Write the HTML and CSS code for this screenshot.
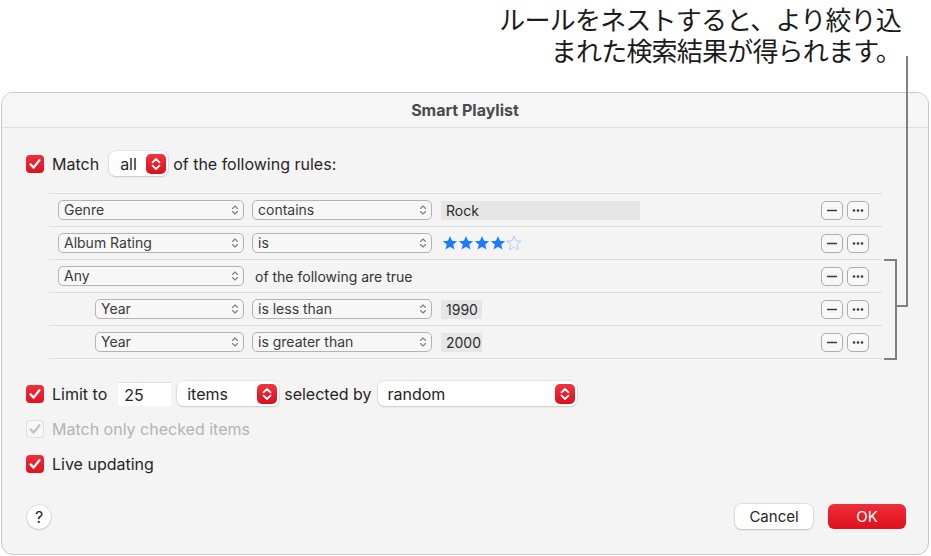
FILE: index.html
```html
<!DOCTYPE html>
<html lang="ja">

<head>
    <meta charset="UTF-8">
    <title>Smart Playlist</title>
    <link rel="stylesheet" href="styles.css">
</head>

<body>
    <div class="callout">ルールをネストすると、より絞り込<br>まれた検索結果が得られます。</div>

    <div class="window">
        <div class="titlebar">Smart Playlist</div>
        <div class="content">
            <div class="line match-line">
                <span class="check"><svg viewBox="0 0 18 18"><path d="M4.6 9.4l3 3.2 5.8-7.4" /></svg></span>
                <span class="label">Match</span>
                <span class="popup popup-all">all
                    <span class="stepper"><svg viewBox="0 0 20 20"><path d="M6.5 8.3L10 5l3.5 3.3M6.5 11.7L10 15l3.5-3.3" /></svg></span>
                </span>
                <span class="label after">of the following rules:</span>
            </div>

            <div class="rules">
                <div class="rule">
                    <span class="select sel-a">Genre<svg class="arrows" viewBox="0 0 8 12"><path d="M1.5 4.5L4 2l2.5 2.5M1.5 7.5L4 10l2.5-2.5" /></svg></span>
                    <span class="select sel-b">contains<svg class="arrows" viewBox="0 0 8 12"><path d="M1.5 4.5L4 2l2.5 2.5M1.5 7.5L4 10l2.5-2.5" /></svg></span>
                    <span class="field field-wide">Rock</span>
                    <span class="tools">
                        <span class="sq"><svg viewBox="0 0 20 17"><path class="minus" d="M5 8.5h10" /></svg></span>
                        <span class="sq"><svg viewBox="0 0 20 17"><circle cx="6" cy="8.5" r="1.3" /><circle cx="10" cy="8.5" r="1.3" /><circle cx="14" cy="8.5" r="1.3" /></svg></span>
                    </span>
                </div>
                <div class="rule">
                    <span class="select sel-a">Album Rating<svg class="arrows" viewBox="0 0 8 12"><path d="M1.5 4.5L4 2l2.5 2.5M1.5 7.5L4 10l2.5-2.5" /></svg></span>
                    <span class="select sel-b">is<svg class="arrows" viewBox="0 0 8 12"><path d="M1.5 4.5L4 2l2.5 2.5M1.5 7.5L4 10l2.5-2.5" /></svg></span>
                    <span class="stars">
                        <svg viewBox="0 0 16 16"><polygon class="on" points="8,1 10,5.8 15.2,6.2 11.2,9.5 12.5,14.6 8,11.8 3.5,14.6 4.8,9.5 0.8,6.2 6,5.8" /></svg>
                        <svg viewBox="0 0 16 16"><polygon class="on" points="8,1 10,5.8 15.2,6.2 11.2,9.5 12.5,14.6 8,11.8 3.5,14.6 4.8,9.5 0.8,6.2 6,5.8" /></svg>
                        <svg viewBox="0 0 16 16"><polygon class="on" points="8,1 10,5.8 15.2,6.2 11.2,9.5 12.5,14.6 8,11.8 3.5,14.6 4.8,9.5 0.8,6.2 6,5.8" /></svg>
                        <svg viewBox="0 0 16 16"><polygon class="on" points="8,1 10,5.8 15.2,6.2 11.2,9.5 12.5,14.6 8,11.8 3.5,14.6 4.8,9.5 0.8,6.2 6,5.8" /></svg>
                        <svg viewBox="0 0 16 16"><polygon class="off" points="8,1 10,5.8 15.2,6.2 11.2,9.5 12.5,14.6 8,11.8 3.5,14.6 4.8,9.5 0.8,6.2 6,5.8" /></svg>
                    </span>
                    <span class="tools">
                        <span class="sq"><svg viewBox="0 0 20 17"><path class="minus" d="M5 8.5h10" /></svg></span>
                        <span class="sq"><svg viewBox="0 0 20 17"><circle cx="6" cy="8.5" r="1.3" /><circle cx="10" cy="8.5" r="1.3" /><circle cx="14" cy="8.5" r="1.3" /></svg></span>
                    </span>
                </div>
                <div class="rule">
                    <span class="select sel-a">Any<svg class="arrows" viewBox="0 0 8 12"><path d="M1.5 4.5L4 2l2.5 2.5M1.5 7.5L4 10l2.5-2.5" /></svg></span>
                    <span class="rule-text">of the following are true</span>
                    <span class="tools">
                        <span class="sq"><svg viewBox="0 0 20 17"><path class="minus" d="M5 8.5h10" /></svg></span>
                        <span class="sq"><svg viewBox="0 0 20 17"><circle cx="6" cy="8.5" r="1.3" /><circle cx="10" cy="8.5" r="1.3" /><circle cx="14" cy="8.5" r="1.3" /></svg></span>
                    </span>
                </div>
                <div class="rule nested">
                    <span class="select sel-a">Year<svg class="arrows" viewBox="0 0 8 12"><path d="M1.5 4.5L4 2l2.5 2.5M1.5 7.5L4 10l2.5-2.5" /></svg></span>
                    <span class="select sel-b">is less than<svg class="arrows" viewBox="0 0 8 12"><path d="M1.5 4.5L4 2l2.5 2.5M1.5 7.5L4 10l2.5-2.5" /></svg></span>
                    <span class="field">1990</span>
                    <span class="tools">
                        <span class="sq"><svg viewBox="0 0 20 17"><path class="minus" d="M5 8.5h10" /></svg></span>
                        <span class="sq"><svg viewBox="0 0 20 17"><circle cx="6" cy="8.5" r="1.3" /><circle cx="10" cy="8.5" r="1.3" /><circle cx="14" cy="8.5" r="1.3" /></svg></span>
                    </span>
                </div>
                <div class="rule nested">
                    <span class="select sel-a">Year<svg class="arrows" viewBox="0 0 8 12"><path d="M1.5 4.5L4 2l2.5 2.5M1.5 7.5L4 10l2.5-2.5" /></svg></span>
                    <span class="select sel-b">is greater than<svg class="arrows" viewBox="0 0 8 12"><path d="M1.5 4.5L4 2l2.5 2.5M1.5 7.5L4 10l2.5-2.5" /></svg></span>
                    <span class="field">2000</span>
                    <span class="tools">
                        <span class="sq"><svg viewBox="0 0 20 17"><path class="minus" d="M5 8.5h10" /></svg></span>
                        <span class="sq"><svg viewBox="0 0 20 17"><circle cx="6" cy="8.5" r="1.3" /><circle cx="10" cy="8.5" r="1.3" /><circle cx="14" cy="8.5" r="1.3" /></svg></span>
                    </span>
                </div>
            </div>

            <div class="line limit-line">
                <span class="check"><svg viewBox="0 0 18 18"><path d="M4.6 9.4l3 3.2 5.8-7.4" /></svg></span>
                <span class="label">Limit to</span>
                <span class="number">25</span>
                <span class="popup popup-items">items
                    <span class="stepper"><svg viewBox="0 0 20 20"><path d="M6.5 8.3L10 5l3.5 3.3M6.5 11.7L10 15l3.5-3.3" /></svg></span>
                </span>
                <span class="label after">selected by</span>
                <span class="popup popup-random">random
                    <span class="stepper"><svg viewBox="0 0 20 20"><path d="M6.5 8.3L10 5l3.5 3.3M6.5 11.7L10 15l3.5-3.3" /></svg></span>
                </span>
            </div>

            <div class="line disabled">
                <span class="check off"><svg viewBox="0 0 18 18"><path d="M4.6 9.4l3 3.2 5.8-7.4" /></svg></span>
                <span class="label">Match only checked items</span>
            </div>

            <div class="line">
                <span class="check"><svg viewBox="0 0 18 18"><path d="M4.6 9.4l3 3.2 5.8-7.4" /></svg></span>
                <span class="label">Live updating</span>
            </div>

            <div class="footer">
                <span class="help">?</span>
                <span class="button cancel">Cancel</span>
                <span class="button ok">OK</span>
            </div>
        </div>
    </div>

    <!-- callout leader and bracket drawn over the dialog -->
    <div class="leader"></div>
    <div class="bracket"></div>
</body>

</html>
```

FILE: styles.css
```css
body {
    margin: 0;
    width: 931px;
    height: 556px;
    overflow: hidden;
    position: relative;
    background-color: #ffffff;
    font-family: Inter, "Liberation Sans", sans-serif;
    color: #262626;
}

.callout {
    height: 63px;
    padding: 3px 30px 0 0;
    text-align: right;
    font-family: "Noto Sans CJK JP", sans-serif;
    font-size: 26px;
    line-height: 31px;
    color: #1b1b1b;
    letter-spacing: -0.8px;
}

.window {
    margin: 26px 0 0 1px;
    width: 928px;
    height: 463px;
    box-sizing: border-box;
    border: 1px solid #c9c9c9;
    border-radius: 12px;
    background-color: #f4f4f4;
    display: flex;
    flex-direction: column;
    overflow: hidden;
}

.titlebar {
    height: 34px;
    line-height: 34px;
    flex-shrink: 0;
    text-align: center;
    font-size: 16px;
    font-weight: 700;
    color: #4b4b4b;
    background-color: #f6f6f6;
    border-bottom: 1px solid #e1e1e1;
}

.content {
    flex: 1;
    display: flex;
    flex-direction: column;
    padding: 0 22px 25px 24px;
}

.line {
    display: flex;
    align-items: center;
    height: 25px;
    margin-top: 10px;
    font-size: 16px;
}

.match-line {
    margin-top: 23px;
}

.limit-line {
    margin-top: 22px;
}

.check {
    width: 18px;
    height: 18px;
    border-radius: 4px;
    background: linear-gradient(#ef2f3b, #dc1420);
    display: flex;
    flex-shrink: 0;
}

.check svg {
    width: 18px;
    height: 18px;
}

.check path {
    fill: none;
    stroke: #ffffff;
    stroke-width: 2.3;
    stroke-linecap: round;
    stroke-linejoin: round;
}

.check.off {
    background: #f7f7f7;
    box-shadow: inset 0 0 0 1px #dedede;
}

.check.off path {
    stroke: #c4c4c4;
}

.label {
    margin-left: 8px;
}

.label.after {
    margin-left: 5px;
}

.disabled .label {
    color: #b3b3b3;
}

.popup {
    height: 25px;
    box-sizing: border-box;
    background-color: #ffffff;
    border-radius: 6px;
    box-shadow: 0 0 0 0.5px rgba(0, 0, 0, 0.12), 0 1px 2px rgba(0, 0, 0, 0.12);
    display: flex;
    align-items: center;
    justify-content: space-between;
    padding: 0 2px 0 11px;
    font-size: 16px;
}

.popup-all {
    width: 59px;
    margin-left: 10px;
}

.popup-items {
    width: 102px;
    margin-left: 6px;
    padding-left: 10px;
}

.popup-random {
    width: 199px;
    margin-left: 6px;
    padding-left: 10px;
}

.stepper {
    width: 20px;
    height: 20px;
    border-radius: 5px;
    background: linear-gradient(#f0343f, #d9101c);
    display: flex;
}

.stepper svg {
    width: 20px;
    height: 20px;
}

.stepper path {
    fill: none;
    stroke: #ffffff;
    stroke-width: 1.8;
    stroke-linecap: round;
    stroke-linejoin: round;
}

.number {
    width: 53px;
    height: 24px;
    box-sizing: border-box;
    margin-left: 11px;
    padding-left: 6px;
    line-height: 24px;
    background-color: #ffffff;
    border-top: 1px solid #dddddd;
}

.rules {
    margin: 17px 0 0 23px;
    width: 833px;
    border-top: 1px solid #dcdcdc;
}

.rule {
    height: 32px;
    border-bottom: 1px solid #dcdcdc;
    display: flex;
    align-items: center;
    padding: 0 13px 0 9px;
    font-size: 14px;
    color: #333333;
}

.rule.nested {
    padding-left: 46px;
}

.select {
    height: 20px;
    box-sizing: border-box;
    border: 1px solid #b3b3b3;
    border-radius: 5px;
    background-color: #f7f7f7;
    display: flex;
    align-items: center;
    justify-content: space-between;
    padding: 0 4px 0 5px;
    line-height: 18px;
    color: #3a3a3a;
}

.sel-a {
    width: 186px;
}

.nested .sel-a {
    width: 149px;
}

.sel-b {
    width: 180px;
    margin-left: 8px;
}

.arrows {
    width: 8px;
    height: 12px;
}

.arrows path {
    fill: none;
    stroke: #808080;
    stroke-width: 1.1;
    stroke-linecap: round;
    stroke-linejoin: round;
}

.field {
    margin-left: 9px;
    width: 41px;
    height: 19px;
    box-sizing: border-box;
    padding-left: 5px;
    line-height: 19px;
    background-color: #e6e6e6;
    color: #2c2c2c;
}

.field-wide {
    width: 199px;
}

.rule-text {
    margin-left: 11px;
}

.stars {
    margin-left: 10px;
    display: flex;
}

.stars svg {
    width: 16px;
    height: 16px;
}

.stars .on {
    fill: #1a7cf6;
}

.stars .off {
    fill: none;
    stroke: #a9c9f7;
    stroke-width: 0.9;
}

.tools {
    margin-left: auto;
    display: flex;
    gap: 4px;
}

.sq {
    width: 22px;
    height: 19px;
    box-sizing: border-box;
    border: 1px solid #acacac;
    border-radius: 5px;
    background-color: #f8f8f8;
    display: flex;
}

.sq svg {
    width: 20px;
    height: 17px;
    fill: #3a3a3a;
}

.sq .minus {
    stroke: #3a3a3a;
    stroke-width: 1.5;
}

.footer {
    margin-top: auto;
    display: flex;
    align-items: center;
    height: 25px;
}

.help {
    margin-left: 1px;
    width: 24px;
    height: 24px;
    border-radius: 50%;
    background-color: #ffffff;
    box-shadow: 0 0 0 0.5px rgba(0, 0, 0, 0.15), 0 1px 2px rgba(0, 0, 0, 0.15);
    display: flex;
    align-items: center;
    justify-content: center;
    font-size: 16px;
}

.button {
    width: 78px;
    height: 25px;
    border-radius: 6px;
    display: flex;
    align-items: center;
    justify-content: center;
    font-size: 15px;
}

.cancel {
    margin-left: auto;
    background-color: #ffffff;
    box-shadow: 0 0 0 0.5px rgba(0, 0, 0, 0.15), 0 1px 2px rgba(0, 0, 0, 0.15);
}

.ok {
    margin-left: 15px;
    color: #ffffff;
    background: linear-gradient(#ee2f3b, #e00f1b);
}

.leader {
    position: absolute;
    left: 896px;
    top: 56px;
    width: 10px;
    height: 249px;
    border-right: 2px solid #808080;
    border-bottom: 2px solid #808080;
}

.bracket {
    position: absolute;
    left: 884px;
    top: 259px;
    width: 11px;
    height: 97px;
    border: 2px solid #808080;
    border-left: none;
}
```
